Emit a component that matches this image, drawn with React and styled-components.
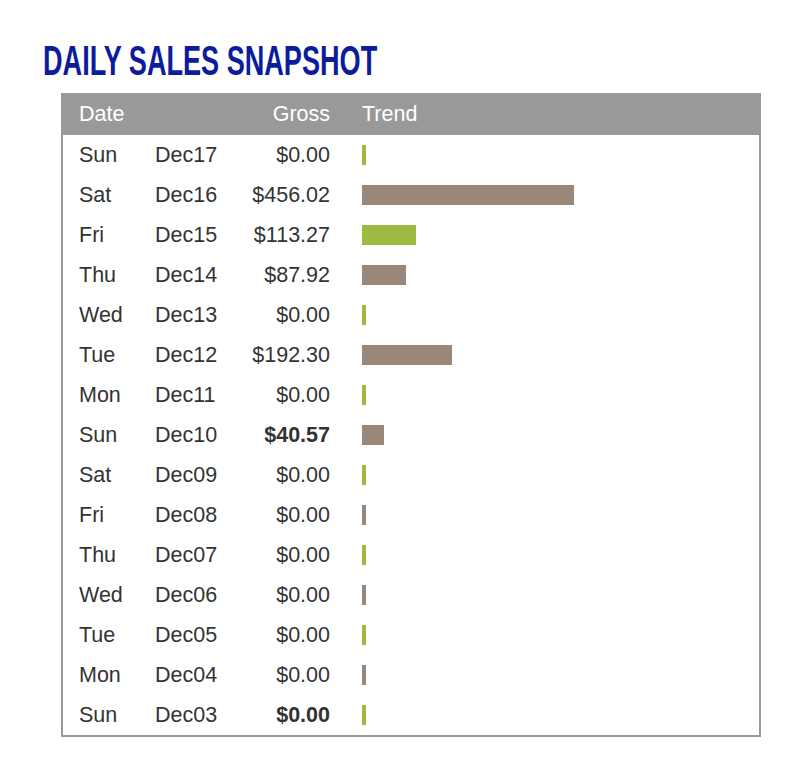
import React from "react";
import styled, { createGlobalStyle } from "styled-components";

const GlobalStyle = createGlobalStyle`
  body {
    margin: 0;
    background: #ffffff;
    font-family: "Liberation Sans", Arial, Helvetica, sans-serif;
  }
`;

const Page = styled.div`
  width: 798px;
  height: 778px;
  padding: 0 0 0 43px;
  box-sizing: border-box;
`;

const Title = styled.h1`
  margin: 0;
  padding-top: 36px;
  height: 93px;
  box-sizing: border-box;
  font-family: "Liberation Sans", Arial, sans-serif;
  font-weight: 700;
  font-size: 43px;
  line-height: 48px;
  color: #0b1c9c;
  white-space: nowrap;
  transform: scaleX(0.63);
  transform-origin: left top;
`;

const Table = styled.div`
  margin-left: 18px;
  width: 700px;
  border: 2px solid #999999;
  border-top: none;
  box-sizing: border-box;
`;

const Row = styled.div`
  display: grid;
  grid-template-columns: 76px 80px 95px 1fr;
  align-items: center;
  height: ${(p) => (p.$head ? "42px" : "40px")};
  margin: ${(p) => (p.$head ? "0 -2px" : "0")};
  padding-left: ${(p) => (p.$head ? "18px" : "16px")};
  background: ${(p) => (p.$head ? "#999999" : "transparent")};
  color: ${(p) => (p.$head ? "#ffffff" : "#333333")};
  font-size: 21.5px;
`;

const Cell = styled.div`
  text-align: ${(p) => (p.$right ? "right" : "left")};
  font-weight: ${(p) => (p.$bold ? 700 : 400)};
  white-space: nowrap;
`;

const TrendCell = styled.div`
  padding-left: 32px;
  display: flex;
  align-items: center;
`;

const Bar = styled.div`
  height: 20px;
  background: ${(p) => (p.$alt ? "#998779" : "#9eba41")};
`;

// [day, date, gross, trend bar width, bold]
const sales = [
  ["Sun", "Dec17", 0, 4],
  ["Sat", "Dec16", 456.02, 212],
  ["Fri", "Dec15", 113.27, 54],
  ["Thu", "Dec14", 87.92, 44],
  ["Wed", "Dec13", 0, 4],
  ["Tue", "Dec12", 192.3, 90],
  ["Mon", "Dec11", 0, 4],
  ["Sun", "Dec10", 40.57, 22, true],
  ["Sat", "Dec09", 0, 4],
  ["Fri", "Dec08", 0, 4],
  ["Thu", "Dec07", 0, 4],
  ["Wed", "Dec06", 0, 4],
  ["Tue", "Dec05", 0, 4],
  ["Mon", "Dec04", 0, 4],
  ["Sun", "Dec03", 0, 4, true],
];

export default function App() {
  return (
    <Page>
      <GlobalStyle />
      <Title>DAILY SALES SNAPSHOT</Title>
      <Table>
        <Row $head>
          <Cell>Date</Cell>
          <Cell />
          <Cell $right>Gross</Cell>
          <TrendCell>Trend</TrendCell>
        </Row>
        {sales.map(([day, date, gross, trend, bold], i) => (
          <Row key={date}>
            <Cell>{day}</Cell>
            <Cell>{date}</Cell>
            <Cell $right $bold={bold}>
              ${gross.toFixed(2)}
            </Cell>
            <TrendCell>
              <Bar $alt={i % 2 === 1} style={{ width: trend }} />
            </TrendCell>
          </Row>
        ))}
      </Table>
    </Page>
  );
}
